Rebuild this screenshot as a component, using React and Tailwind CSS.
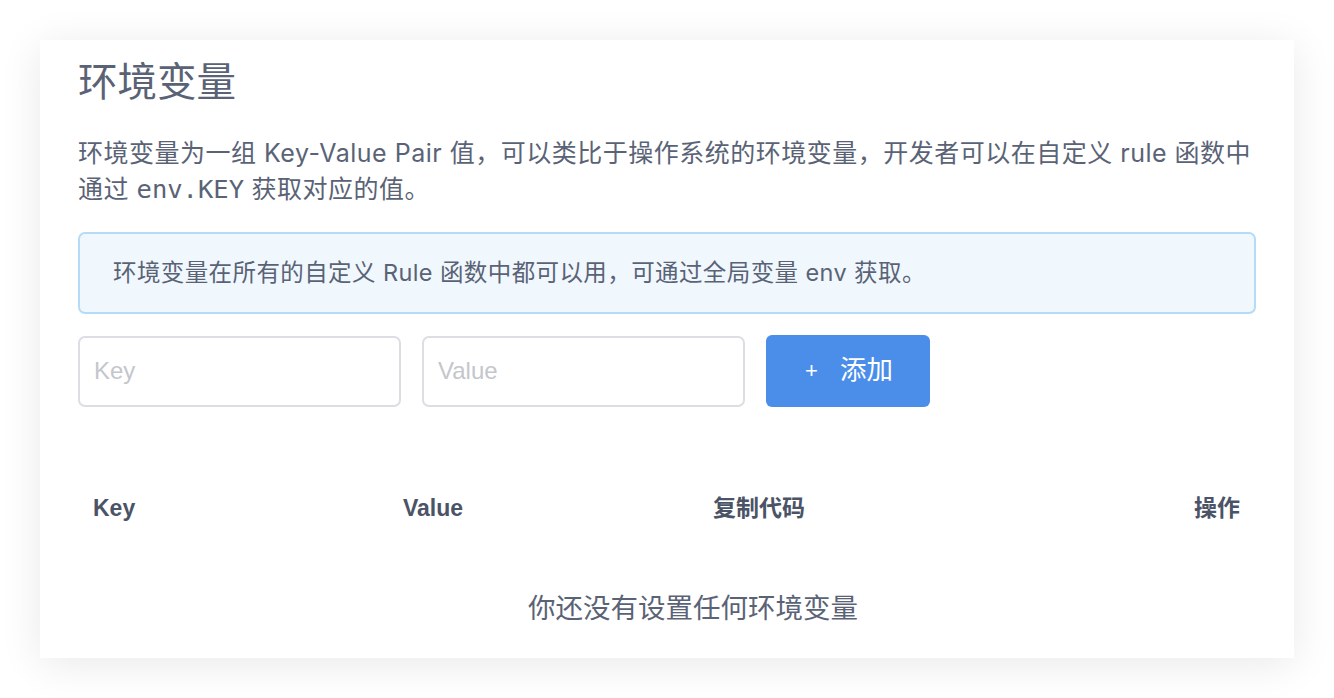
import React from "react";

const sans = { fontFamily: '"Liberation Sans", "Noto Sans CJK SC", sans-serif' };
const inter = { fontFamily: 'Inter, "Noto Sans CJK SC", sans-serif' };

export default function App() {
  return (
    <div className="min-h-[698px] w-full bg-white pt-[40px] pl-[40px]" style={sans}>
      <div className="w-[1254px] h-[618px] bg-white shadow-[0_6px_40px_rgba(0,0,0,0.09)] pt-[18px] px-[38px] text-[#5a6376]">
        <h1 className="text-[39.5px] leading-[48px] font-normal">环境变量</h1>
        <p className="mt-[29px] text-[25px] leading-[36px] tracking-[0.5px]" style={inter}>
          环境变量为一组 Key-Value Pair 值，可以类比于操作系统的环境变量，开发者可以在自定义 rule 函数中
          <br />
          通过 <span className="font-['DejaVu_Sans_Mono',monospace] text-[25.5px] tracking-normal">env.KEY</span> 获取对应的值。
        </p>
        <div className="mt-[25px] h-[82px] rounded-[7px] border-2 border-[#b5dbf8] bg-[#f0f8fe] flex items-center pl-[33px] text-[23.5px] tracking-[0.4px]" style={inter}>
          环境变量在所有的自定义 Rule 函数中都可以用，可通过全局变量 env 获取。
        </div>
        <div className="mt-[21px] flex items-center gap-[21px]">
          <input
            placeholder="Key"
            className="w-[323px] h-[71px] rounded-[7px] border-2 border-[#dcdee3] px-[14px] text-[24px] outline-none placeholder:text-[#c4c6cc]"
          />
          <input
            placeholder="Value"
            className="w-[323px] h-[71px] rounded-[7px] border-2 border-[#dcdee3] px-[14px] text-[24px] outline-none placeholder:text-[#c4c6cc]"
          />
          <button className="w-[164px] h-[72px] rounded-[6px] bg-[#4a8ee9] text-white flex items-center justify-center gap-[22px] pl-[2px]">
            <span className="text-[22px] font-extralight leading-none">+</span>
            <span className="text-[26.5px]">添加</span>
          </button>
        </div>
        <div className="mt-[71px] grid grid-cols-[310px_310px_310px_1fr] h-[60px] items-center pl-[15px] pr-[16px] text-[23px] font-bold text-[#4b5366]">
          <div className="-ml-[15px] pl-[15px]">Key</div>
          <div className="-ml-[15px] pl-[15px]">Value</div>
          <div className="-ml-[15px] pl-[15px]">复制代码</div>
          <div className="text-right">操作</div>
        </div>
        <div className="mt-[41px] h-[60px] flex items-center justify-center pl-[52px] text-[27.5px]">
          你还没有设置任何环境变量
        </div>
      </div>
    </div>
  );
}
